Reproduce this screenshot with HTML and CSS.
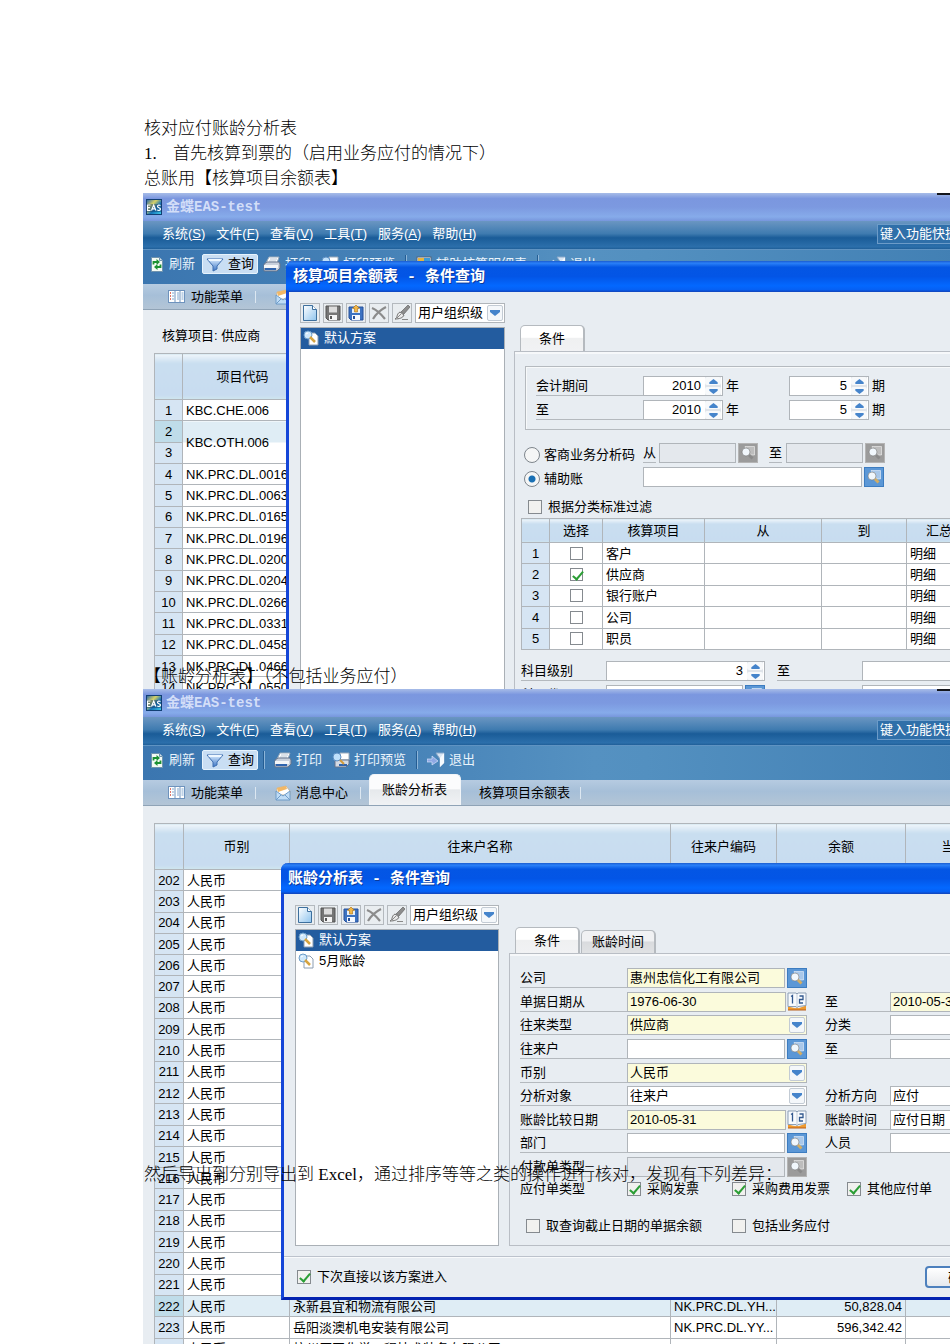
FILE: index.html
```html
<!DOCTYPE html>
<html lang="zh-CN">
<head>
<meta charset="utf-8">
<title>核对应付账龄分析表</title>
<link rel="stylesheet" href="styles.css">
</head>
<body>
<svg class="defs" aria-hidden="true">
  <defs>
    <linearGradient id="g-blue" x1="0" y1="0" x2="1" y2="1"><stop offset="0" stop-color="#fff"/><stop offset="1" stop-color="#8fc4ee"/></linearGradient>
    <linearGradient id="g-eas" x1="0" y1="0" x2="1" y2="1"><stop offset="0" stop-color="#1c5fae"/><stop offset=".35" stop-color="#d8d264"/><stop offset=".6" stop-color="#1673b8"/><stop offset="1" stop-color="#3fd0ea"/></linearGradient>
    <linearGradient id="g-funnel" x1="0" y1="0" x2="0" y2="1"><stop offset="0" stop-color="#d9ecff"/><stop offset="1" stop-color="#3a74c4"/></linearGradient>
    <symbol id="eas" viewBox="0 0 16 16"><rect x=".5" y=".5" width="15" height="15" fill="url(#g-eas)" stroke="#123f74"/><rect y="5" width="16" height="8" fill="#123a6a" opacity=".45"/><path d="M4.500 6H1.500v5.500h3M1.500 8.700h2.500M5.500 11.500L7.700 6l2.200 5.500M6.300 9.800h2.800M14.500 6.500c-1-.8-3-.6-3 .9 0 1.600 3 1 3 2.700 0 1.500-2.200 1.800-3.300.8" fill="none" stroke="#fff" stroke-width="1.200"/></symbol>
    <symbol id="refresh" viewBox="0 0 16 16"><path d="M2.500 1.500h8l3 3v11h-11z" fill="#f4faf4" stroke="#6f93ae"/><path d="M10.500 1.500v3h3" fill="#cfe0ea" stroke="#6f93ae"/><path d="M4.500 8.500V6H8M11.500 8.500V11H8" fill="none" stroke="#1c9133" stroke-width="1.800"/><path d="M7.500 3l3.500 3-3.500 3zM8.500 8L5 11l3.500 3z" fill="#1c9133"/></symbol>
    <symbol id="funnel" viewBox="0 0 18 16"><path d="M1 3h16l-6 7v3l-4 2v-5z" fill="url(#g-funnel)" stroke="#3f6fb0"/><path d="M2 3h14l-1 2H3z" fill="#eef7ff"/></symbol>
    <symbol id="printer" viewBox="0 0 18 16"><path d="M6 1h10l-2 6H3z" fill="#fff" stroke="#9ab"/><path d="M7 3h7M6 5h7" stroke="#b6c4d4"/><path d="M1 8l3-2h12l1 2v4l-3 3H1z" fill="#c8d0dc" stroke="#66758c"/><path d="M1 9h14v3H1z" fill="#f4f6f8"/><path d="M2 13h11" stroke="#2f64ae" stroke-width="2"/></symbol>
    <symbol id="preview" viewBox="0 0 18 16"><path d="M8 1h9v7H8z" fill="#fff" stroke="#9ab"/><path d="M3 8h14v4l-3 3H3z" fill="#d5dbe4" stroke="#66758c"/><path d="M7 13h8" stroke="#2f64ae" stroke-width="2"/><circle cx="5" cy="5" r="4" fill="#bfe0fb" stroke="#5d8fc4"/><path d="M8 8l4 4" stroke="#d29a3a" stroke-width="2"/></symbol>
    <symbol id="exit" viewBox="0 0 18 16"><path d="M9 1h8v10l-4 4V7z" fill="#d8e6f4" stroke="#8aa8c8"/><path d="M17 1l-4 5v9l4-4z" fill="#f6fbff"/><path d="M0 7h5V4l6 5-6 4v-3H0z" fill="#8fa9e4" stroke="#e4eeff" stroke-width=".6"/></symbol>
    <symbol id="detail" viewBox="0 0 16 16"><rect x="1" y="1" width="14" height="13" fill="#eef" stroke="#567"/><rect x="2" y="2" width="6" height="4" fill="#e8b53c"/><rect x="8" y="2" width="6" height="4" fill="#3a9ad8"/></symbol>
    <symbol id="menu-list" viewBox="0 0 18 16"><rect x=".5" y="1.500" width="16" height="12" fill="#fff" stroke="#6e93bd"/><path d="M7 2v12M12 2v12" stroke="#6e93bd"/><path d="M9 4h2M9 6h2M9 8h2M9 10h2M13.500 4h2M13.500 6h2M13.500 8h2M13.500 10h2M4 4h2M4 7h2M4 10h2" stroke="#7fa6cf"/><path d="M2 4h1M2 7h1M2 10h1" stroke="#d04a3a" stroke-width="1.500"/></symbol>
    <symbol id="mail" viewBox="0 0 16 16"><path d="M2 3l9-2 4 5v4H1z" fill="#fff" stroke="#c9b79a"/><path d="M2 3l9-2 1 3-9 3z" fill="#f2b765"/><path d="M1 6l7 5 7-5v9H1z" fill="#bfdcf6" stroke="#6f9cc8"/><path d="M1 15l5-5M15 15l-5-5" stroke="#6f9cc8"/></symbol>
    <symbol id="new" viewBox="0 0 16 16"><path d="M1.500.500h9l4 4v11h-13z" fill="url(#g-blue)" stroke="#3d6f9d"/><path d="M10.500.500v4h4" fill="#fff" stroke="#3d6f9d"/></symbol>
    <symbol id="save" viewBox="0 0 16 16"><path d="M1 1h14v14H3l-2-2z" fill="#757575" stroke="#555"/><rect x="4" y="1.500" width="8" height="6" fill="#dcdcdc"/><rect x="4" y="10" width="8" height="5" fill="#f4f4f4"/><rect x="5" y="11" width="2" height="3" fill="#555"/></symbol>
    <symbol id="saveas" viewBox="0 0 16 16"><path d="M1 2h14v13H3l-2-2z" fill="#3c72c2" stroke="#27509a"/><rect x="4" y="3" width="8" height="5" fill="#e6effa"/><rect x="4" y="10" width="8" height="5" fill="#f4f8ff"/><rect x="5" y="11" width="2" height="3" fill="#27509a"/><path d="M8 0l3.500 3.500h-2V7h-3V3.500h-2z" fill="#f3b746" stroke="#a86f12" stroke-width=".6"/></symbol>
    <symbol id="delete" viewBox="0 0 16 16"><path d="M1 3c5 2 9 6 13 11M15 2C9 5 5 9 2 14" stroke="#8c8c8c" stroke-width="2.200" fill="none"/></symbol>
    <symbol id="brush" viewBox="0 0 16 16"><path d="M14 0l2 2-6 7-3-2z" fill="#8d8d8d" stroke="#666" stroke-width=".7"/><path d="M6 7l4 3c-1 3-5 4-9 4 3-1 1-5 5-7z" fill="#e9e9e9" stroke="#707070"/><path d="M3 13l4-4M8 14.500h6" stroke="#888"/></symbol>
    <symbol id="plan" viewBox="0 0 16 16"><path d="M6 3h6l3 3v9H6z" fill="#fff" stroke="#8b9db2"/><circle cx="5" cy="5" r="4" fill="#cfe8fb" stroke="#6a9cc9"/><path d="M7 7l5 5" stroke="#d5a441" stroke-width="2.500"/><path d="M3 4l2-1" stroke="#fff"/></symbol>
    <symbol id="lookup" viewBox="0 0 16 16"><path d="M5 1.500h9.500V10H8z" fill="currentColor" stroke="#fff" stroke-opacity=".5"/><path d="M8 9l4.500 4.500" stroke="var(--handle)" stroke-width="2.800"/><circle cx="6" cy="7" r="4" fill="#f1f7fc" stroke="#777" stroke-width=".6"/></symbol>
    <symbol id="calendar" viewBox="0 0 20 18"><path d="M1 16h18v2H1z" fill="#b95f1c"/><path d="M1 14l8 2 1-1 1 1 8-3v4H1z" fill="#ef9a2e"/><path d="M1 .5h8l1 1 1-1h8V13l-8 1-1 1-1-1H1z" fill="#f7fafd" stroke="#8d9fb5"/><path d="M10 2v13" stroke="#8d9fb5" stroke-dasharray="1 1"/><path d="M4 4l1.500-1v8M12.500 3.500H16V7h-3.500v3.500H16" fill="none" stroke="#32588e" stroke-width="1.300"/></symbol>
    <symbol id="down" viewBox="0 0 10 6"><path d="M0 0h10v2L5 6 0 2z" fill="#4584cb"/></symbol>
    <symbol id="up" viewBox="0 0 10 6"><path d="M5 0l5 4v2H0V4z" fill="#4584cb"/></symbol>
  </defs>
</svg>

<main class="page">
  <p class="line">核对应付账龄分析表</p>
  <p class="line"><span class="line-no">1.</span>首先核算到票的（启用业务应付的情况下）</p>
  <p class="line">总账用【核算项目余额表】</p>

  <figure class="shot shot-first">
    <div class="screen">
      <header class="titlebar"><svg class="ic16"><use href="#eas"/></svg>金蝶EAS-test<i class="edge"></i></header>
      <nav class="menubar">
        <a href="#">系统(<u>S</u>)</a><a href="#">文件(<u>F</u>)</a><a href="#">查看(<u>V</u>)</a><a href="#">工具(<u>T</u>)</a><a href="#">服务(<u>A</u>)</a><a href="#">帮助(<u>H</u>)</a>
        <input class="quick" aria-label="功能快捷码" value="键入功能快捷码">
      </nav>
      <div class="toolbar">
        <button class="tool"><svg class="ic16"><use href="#refresh"/></svg>刷新</button>
        <button class="tool tool-on"><svg class="ic18"><use href="#funnel"/></svg>查询</button>
        <button class="tool"><svg class="ic18"><use href="#printer"/></svg>打印</button>
        <button class="tool"><svg class="ic18"><use href="#preview"/></svg>打印预览</button>
        <i class="sep"></i>
        <button class="tool"><svg class="ic16"><use href="#detail"/></svg>辅助核算明细表</button>
        <i class="sep"></i>
        <button class="tool"><svg class="ic18"><use href="#exit"/></svg>退出</button>
      </div>
      <div class="tabbar">
        <button class="tab"><svg class="ic18"><use href="#menu-list"/></svg>功能菜单</button>
        <button class="tab"><svg class="ic16"><use href="#mail"/></svg>消息中心</button>
      </div>
      <section class="content content-first">
        <p class="subject">核算项目: 供应商</p>
        <table class="grid items">
          <colgroup><col class="w28"><col class="w120"></colgroup>
          <thead><tr class="head-tall"><th></th><th>项目代码</th></tr></thead>
          <tbody>
            <tr><th>1</th><td>KBC.CHE.006</td></tr>
            <tr><th class="hit">2</th><td class="merged" rowspan="2">KBC.OTH.006</td></tr>
            <tr><th>3</th></tr>
            <tr><th>4</th><td>NK.PRC.DL.0016</td></tr>
            <tr><th>5</th><td>NK.PRC.DL.0063</td></tr>
            <tr><th>6</th><td>NK.PRC.DL.0165</td></tr>
            <tr><th>7</th><td>NK.PRC.DL.0196</td></tr>
            <tr><th>8</th><td>NK.PRC.DL.0200</td></tr>
            <tr><th>9</th><td>NK.PRC.DL.0204</td></tr>
            <tr><th>10</th><td>NK.PRC.DL.0266</td></tr>
            <tr><th>11</th><td>NK.PRC.DL.0331</td></tr>
            <tr><th>12</th><td>NK.PRC.DL.0458</td></tr>
            <tr><th>13</th><td>NK.PRC.DL.0466</td></tr>
            <tr><th>14</th><td>NK.PRC.DL.0550</td></tr>
          </tbody>
        </table>
      </section>

      <section class="dialog dialog-first">
        <h2 class="dialog-title">核算项目余额表 - 条件查询</h2>
        <div class="dialog-body">
          <div class="side">
            <div class="plan-tools">
              <button class="sq" aria-label="新建"><svg class="ic16"><use href="#new"/></svg></button>
              <button class="sq" aria-label="保存"><svg class="ic16"><use href="#save"/></svg></button>
              <button class="sq" aria-label="另存"><svg class="ic16"><use href="#saveas"/></svg></button>
              <button class="sq" aria-label="删除"><svg class="ic16"><use href="#delete"/></svg></button>
              <button class="sq" aria-label="清空"><svg class="ic16"><use href="#brush"/></svg></button>
              <span class="pick"><select aria-label="级别"><option>用户组织级</option></select><span class="arrow"><svg><use href="#down"/></svg></span></span>
            </div>
            <ul class="plans"><li class="on"><svg class="ic16"><use href="#plan"/></svg>默认方案</li></ul>
          </div>
          <div class="main">
            <div class="ptabs"><button class="ptab on">条件</button></div>
            <div class="panel panel-first">
              <div class="group">
                <div class="row"><label class="lab w107" for="y1">会计期间</label><span class="spin w80"><input id="y1" value="2010"><span class="ud"><button aria-label="增"><svg><use href="#up"/></svg></button><button aria-label="减"><svg><use href="#down"/></svg></button></span></span><span class="unit">年</span><span class="spin w80"><input aria-label="期" value="5"><span class="ud"><button aria-label="增"><svg><use href="#up"/></svg></button><button aria-label="减"><svg><use href="#down"/></svg></button></span></span><span class="unit">期</span></div>
                <div class="row"><label class="lab w107" for="y2">至</label><span class="spin w80"><input id="y2" value="2010"><span class="ud"><button aria-label="增"><svg><use href="#up"/></svg></button><button aria-label="减"><svg><use href="#down"/></svg></button></span></span><span class="unit">年</span><span class="spin w80"><input aria-label="期" value="5"><span class="ud"><button aria-label="增"><svg><use href="#up"/></svg></button><button aria-label="减"><svg><use href="#down"/></svg></button></span></span><span class="unit">期</span></div>
              </div>
              <div class="row modes">
                <label class="opt w122"><input type="radio" name="mode">客商业务分析码</label>
                <label class="lab" for="from">从</label><input class="box w77" id="from" disabled><button class="find off" aria-label="查找" disabled><svg class="ic18"><use href="#lookup"/></svg></button>
                <label class="lab to" for="to">至</label><input class="box w77" id="to" disabled><button class="find off" aria-label="查找" disabled><svg class="ic18"><use href="#lookup"/></svg></button>
              </div>
              <div class="row ledger">
                <label class="opt w122"><input type="radio" name="mode" checked>辅助账</label>
                <input class="box w219" aria-label="辅助账"><button class="find" aria-label="查找"><svg class="ic18"><use href="#lookup"/></svg></button>
              </div>
              <div class="row standard"><label class="opt"><input type="checkbox">根据分类标准过滤</label></div>
              <table class="grid aux">
                <colgroup><col class="w28"><col class="w53"><col class="w102"><col class="w117"><col class="w85"><col class="w85"></colgroup>
                <thead><tr class="head"><th></th><th>选择</th><th>核算项目</th><th>从</th><th>到</th><th class="sum">汇总级次</th></tr></thead>
                <tbody>
                  <tr><th>1</th><td><input type="checkbox" aria-label="客户"></td><td>客户</td><td></td><td></td><td>明细</td></tr>
                  <tr><th>2</th><td><input type="checkbox" aria-label="供应商" checked></td><td>供应商</td><td></td><td></td><td>明细</td></tr>
                  <tr><th>3</th><td><input type="checkbox" aria-label="银行账户"></td><td>银行账户</td><td></td><td></td><td>明细</td></tr>
                  <tr><th>4</th><td><input type="checkbox" aria-label="公司"></td><td>公司</td><td></td><td></td><td>明细</td></tr>
                  <tr><th>5</th><td><input type="checkbox" aria-label="职员"></td><td>职员</td><td></td><td></td><td>明细</td></tr>
                </tbody>
              </table>
              <div class="row levels"><label class="lab w85" for="lv">科目级别</label><span class="spin w159"><input id="lv" value="3"><span class="ud"><button aria-label="增"><svg><use href="#up"/></svg></button><button aria-label="减"><svg><use href="#down"/></svg></button></span></span><label class="lab w85 next" for="lv2">至</label><input class="box w122" id="lv2"></div>
              <div class="row"><label class="lab w85" for="cd">科目代码</label><input class="box w137" id="cd"><button class="find" aria-label="查找"><svg class="ic18"><use href="#lookup"/></svg></button><label class="lab w85 next" for="cd2">至</label><input class="box w122" id="cd2"></div>
            </div>
          </div>
        </div>
      </section>
    </div>
    <figcaption class="over">【账龄分析表】（不包括业务应付）</figcaption>
  </figure>

  <figure class="shot shot-second">
    <div class="screen">
      <header class="titlebar"><svg class="ic16"><use href="#eas"/></svg>金蝶EAS-test<i class="edge"></i></header>
      <nav class="menubar">
        <a href="#">系统(<u>S</u>)</a><a href="#">文件(<u>F</u>)</a><a href="#">查看(<u>V</u>)</a><a href="#">工具(<u>T</u>)</a><a href="#">服务(<u>A</u>)</a><a href="#">帮助(<u>H</u>)</a>
        <input class="quick" aria-label="功能快捷码" value="键入功能快捷码">
      </nav>
      <div class="toolbar">
        <button class="tool"><svg class="ic16"><use href="#refresh"/></svg>刷新</button>
        <button class="tool tool-on"><svg class="ic18"><use href="#funnel"/></svg>查询</button>
        <i class="sep"></i>
        <button class="tool"><svg class="ic18"><use href="#printer"/></svg>打印</button>
        <button class="tool"><svg class="ic18"><use href="#preview"/></svg>打印预览</button>
        <i class="sep"></i>
        <button class="tool"><svg class="ic18"><use href="#exit"/></svg>退出</button>
      </div>
      <div class="tabbar">
        <button class="tab"><svg class="ic18"><use href="#menu-list"/></svg>功能菜单</button>
        <button class="tab"><svg class="ic16"><use href="#mail"/></svg>消息中心</button>
        <button class="tab tab-on">账龄分析表</button>
        <button class="tab">核算项目余额表</button>
      </div>
      <section class="content content-second">
        <table class="grid aging">
          <colgroup><col class="w29"><col class="w106"><col class="w381"><col class="w106"><col class="w129"><col class="w85"></colgroup>
          <thead><tr class="head-tall"><th></th><th>币别</th><th>往来户名称</th><th>往来户编码</th><th>余额</th><th>当</th></tr></thead>
          <tbody>
            <tr><th>202</th><td>人民币</td><td></td><td></td><td></td><td></td></tr>
            <tr><th>203</th><td>人民币</td><td></td><td></td><td></td><td></td></tr>
            <tr><th>204</th><td>人民币</td><td></td><td></td><td></td><td></td></tr>
            <tr><th>205</th><td>人民币</td><td></td><td></td><td></td><td></td></tr>
            <tr><th>206</th><td>人民币</td><td></td><td></td><td></td><td></td></tr>
            <tr><th>207</th><td>人民币</td><td></td><td></td><td></td><td></td></tr>
            <tr><th>208</th><td>人民币</td><td></td><td></td><td></td><td></td></tr>
            <tr><th>209</th><td>人民币</td><td></td><td></td><td></td><td></td></tr>
            <tr><th>210</th><td>人民币</td><td></td><td></td><td></td><td></td></tr>
            <tr><th>211</th><td>人民币</td><td></td><td></td><td></td><td></td></tr>
            <tr><th>212</th><td>人民币</td><td></td><td></td><td></td><td></td></tr>
            <tr><th>213</th><td>人民币</td><td></td><td></td><td></td><td></td></tr>
            <tr><th>214</th><td>人民币</td><td></td><td></td><td></td><td></td></tr>
            <tr><th>215</th><td>人民币</td><td></td><td></td><td></td><td></td></tr>
            <tr><th>216</th><td>人民币</td><td></td><td></td><td></td><td></td></tr>
            <tr><th>217</th><td>人民币</td><td></td><td></td><td></td><td></td></tr>
            <tr><th>218</th><td>人民币</td><td></td><td></td><td></td><td></td></tr>
            <tr><th>219</th><td>人民币</td><td></td><td></td><td></td><td></td></tr>
            <tr><th>220</th><td>人民币</td><td></td><td></td><td></td><td></td></tr>
            <tr><th>221</th><td>人民币</td><td></td><td></td><td></td><td></td></tr>
            <tr class="hit-row"><th class="hit">222</th><td>人民币</td><td>永新县宜和物流有限公司</td><td>NK.PRC.DL.YH...</td><td class="num">50,828.04</td><td></td></tr>
            <tr><th>223</th><td>人民币</td><td>岳阳淡澳机电安装有限公司</td><td>NK.PRC.DL.YY...</td><td class="num">596,342.42</td><td></td></tr>
            <tr><th>224</th><td>人民币</td><td>杭州原正化学工程技术装备有限公司</td><td>NK.PRC.DL.YZ...</td><td class="num">10,200.00</td><td></td></tr>
          </tbody>
        </table>
      </section>

      <section class="dialog dialog-second">
        <h2 class="dialog-title">账龄分析表 - 条件查询</h2>
        <div class="dialog-body">
          <div class="side">
            <div class="plan-tools">
              <button class="sq" aria-label="新建"><svg class="ic16"><use href="#new"/></svg></button>
              <button class="sq" aria-label="保存"><svg class="ic16"><use href="#save"/></svg></button>
              <button class="sq" aria-label="另存"><svg class="ic16"><use href="#saveas"/></svg></button>
              <button class="sq" aria-label="删除"><svg class="ic16"><use href="#delete"/></svg></button>
              <button class="sq" aria-label="清空"><svg class="ic16"><use href="#brush"/></svg></button>
              <span class="pick"><select aria-label="级别"><option>用户组织级</option></select><span class="arrow"><svg><use href="#down"/></svg></span></span>
            </div>
            <ul class="plans"><li class="on"><svg class="ic16"><use href="#plan"/></svg>默认方案</li><li><svg class="ic16"><use href="#plan"/></svg>5月账龄</li></ul>
          </div>
          <div class="main">
            <div class="ptabs"><button class="ptab on">条件</button><button class="ptab">账龄时间</button></div>
            <div class="panel panel-second">
              <div class="fields">
                <div class="field"><label class="lab w107" for="co">公司</label><input class="box must" id="co" value="惠州忠信化工有限公司"><button class="find" aria-label="查找"><svg class="ic18"><use href="#lookup"/></svg></button></div>
                <div class="field right"></div>
                <div class="field"><label class="lab w107" for="d1">单据日期从</label><input class="box must" id="d1" value="1976-06-30"><button class="date" aria-label="日历"><svg><use href="#calendar"/></svg></button></div>
                <div class="field right"><label class="lab w65" for="d2">至</label><input class="box must" id="d2" value="2010-05-31"></div>
                <div class="field"><label class="lab w107" for="ty">往来类型</label><span class="pick must"><select id="ty"><option>供应商</option></select><span class="arrow"><svg><use href="#down"/></svg></span></span></div>
                <div class="field right"><label class="lab w65" for="cl">分类</label><input class="box" id="cl"></div>
                <div class="field"><label class="lab w107" for="pt">往来户</label><input class="box" id="pt"><button class="find" aria-label="查找"><svg class="ic18"><use href="#lookup"/></svg></button></div>
                <div class="field right"><label class="lab w65" for="pt2">至</label><input class="box" id="pt2"></div>
                <div class="field"><label class="lab w107" for="cu">币别</label><span class="pick must"><select id="cu"><option>人民币</option></select><span class="arrow"><svg><use href="#down"/></svg></span></span></div>
                <div class="field right"></div>
                <div class="field"><label class="lab w107" for="ob">分析对象</label><span class="pick"><select id="ob"><option>往来户</option></select><span class="arrow"><svg><use href="#down"/></svg></span></span></div>
                <div class="field right"><label class="lab w65" for="di">分析方向</label><span class="pick"><select id="di"><option>应付</option></select><span class="arrow"><svg><use href="#down"/></svg></span></span></div>
                <div class="field"><label class="lab w107" for="cp">账龄比较日期</label><input class="box must" id="cp" value="2010-05-31"><button class="date" aria-label="日历"><svg><use href="#calendar"/></svg></button></div>
                <div class="field right"><label class="lab w65" for="ti">账龄时间</label><span class="pick"><select id="ti"><option>应付日期</option></select><span class="arrow"><svg><use href="#down"/></svg></span></span></div>
                <div class="field"><label class="lab w107" for="de">部门</label><input class="box" id="de"><button class="find" aria-label="查找"><svg class="ic18"><use href="#lookup"/></svg></button></div>
                <div class="field right"><label class="lab w65" for="pe">人员</label><input class="box" id="pe"></div>
                <div class="field"><label class="lab w107" for="pay">付款单类型</label><input class="box" id="pay" disabled><button class="find off" aria-label="查找" disabled><svg class="ic18"><use href="#lookup"/></svg></button></div>
              </div>
              <div class="row kinds"><span class="w107">应付单类型</span><label class="opt w105"><input type="checkbox" checked>采购发票</label><label class="opt w115"><input type="checkbox" checked>采购费用发票</label><label class="opt"><input type="checkbox" checked>其他应付单</label></div>
              <div class="row extras"><label class="opt w206"><input type="checkbox">取查询截止日期的单据余额</label><label class="opt"><input type="checkbox">包括业务应付</label></div>
            </div>
          </div>
        </div>
        <footer class="dialog-foot"><label class="opt"><input type="checkbox" checked>下次直接以该方案进入</label><button class="ok">确定</button></footer>
      </section>
    </div>
    <figcaption class="over over-mid">然后导出到分别导出到 Excel，通过排序等等之类的操作进行核对，发现有下列差异：</figcaption>
  </figure>
</main>
</body>
</html>
```
FILE: styles.css
```css
* { box-sizing: border-box; }
body { margin: 0; background: #fff; color: #000; }
.defs { position: absolute; width: 0; height: 0; }
button, input, select { font: inherit; color: inherit; margin: 0; padding: 0; border: 0; border-radius: 0; background: none; }
a { color: inherit; text-decoration: none; }
p, figure, h2, ul { margin: 0; padding: 0; }

/* document */
.page { height: 100vh; min-height: 1344px; padding: 116px 0 0 143px; overflow: hidden; display: flex; flex-direction: column; }
.line, .over { font: 300 17px/25px "Liberation Serif", "Noto Sans CJK SC", serif; color: #000; padding-left: 1px; white-space: nowrap; }
.line-no { display: inline-block; width: 29px; }
.shot { position: relative; overflow: hidden; }
.shot-first { margin-top: 2px; height: 496px; flex: none; }
.shot-second { flex: 1; }
.over { position: absolute; left: 0; bottom: 0; }
.over-mid { top: 473px; bottom: auto; }

/* application window */
.screen { position: relative; width: calc(100% + 60px); height: 100%; font: 13px/20px "Liberation Sans", "Noto Sans CJK SC", sans-serif; background: #e8edf2; overflow: hidden; }
.ic16 { width: 16px; height: 16px; flex: none; }
.ic18 { width: 18px; height: 16px; flex: none; }
.titlebar { position: relative; display: flex; align-items: center; gap: 4px; height: 28px; padding-left: 3px; font: bold 14px/20px "Liberation Mono", "Noto Sans CJK SC", monospace; color: #d3def8; background: linear-gradient(#a7bce8, #7b97df 20%, #7c99e0 50%, #86abea 85%, #7796dc); }
.edge { position: absolute; top: 0; right: 40px; width: 33px; height: 2px; background: #14161c; }
.menubar { display: flex; align-items: center; gap: 11px; height: 28px; padding: 0 0 2px 19px; color: #fff; background: linear-gradient(#6b96c2, #3f7bb0 45%, #1a5c98 60%, #2c6fab 92%, #205f98); }
.quick { width: 133px; height: 20px; margin-left: auto; padding-left: 2px; border: 1px solid #6c9bc8; background: #2f6fa9; }
.toolbar { display: flex; align-items: flex-start; height: 35px; padding: 4px 0 0 1px; color: #e9f3fb; background: linear-gradient(90deg, #3b76b0, #4480b6 25%, #5591c1 52%, #5390c0 58%, #3f7db2); border-top: 1px solid #5f93c2; }
.tool { display: flex; align-items: center; gap: 4px; height: 20px; padding: 0 5px; }
.tool-on { margin: 0 0 0 2px; border: 1px solid #e6f3fd; border-radius: 2px; color: #000; background: #c9def3; padding: 0 3px; }
.sep { width: 2px; height: 18px; margin: 1px 4px 0 5px; border-left: 1px solid #245d93; border-right: 1px solid #8db5d8; }
.tabbar { display: flex; align-items: flex-end; height: 26px; padding-left: 13px; background: linear-gradient(#b6cbe1, #a6bfd8 45%, #b3c5d6); border-bottom: 1px solid #8fa3b6; }
.tab { display: flex; align-items: center; gap: 5px; height: 25px; padding: 0 12px; border-right: 1px solid transparent; border-image: linear-gradient(transparent 30%, #dce7f1 30%, #dce7f1 75%, transparent 75%) 1; }
.tab + .tab { margin-left: 7px; }
.tab.tab-on { height: 31px; margin: 0 0 0 8px; padding: 0 13px 0 12px; border: 1px solid #f2f5f8; border-bottom: 0; border-image: none; border-radius: 5px 5px 0 0; background: linear-gradient(#fbfcfd 45%, #e6e9ec 50%, #f0f2f4); }
.tab-on + .tab.tab { margin-left: 6px; padding-right: 10px; }

/* data grids */
.grid { border-collapse: collapse; table-layout: fixed; background: #fff; border: 1px solid #a9afb5; }
.grid th, .grid td { padding: 0 3px; border: 1px solid #b0b5ba; line-height: 19px; font-weight: normal; text-align: left; white-space: nowrap; overflow: hidden; }
.grid tbody th { padding: 0; text-align: center; background: #d6e5f3; }
.grid thead th { text-align: center; background: linear-gradient(#eef5fa, #c9def0 20%, #c8dcf0 90%, #cfe6ee); }
.grid .head-tall { height: 46px; }
.grid .head { height: 24px; }
.grid tbody .hit { background: #bfdce9; }
.grid .hit-row td { background: #dfedf5; }
.grid .merged { background: linear-gradient(#dfedf5 50%, #fff 50%); }
.grid .num { text-align: right; }
.grid th.sum { text-align: left; padding-left: 19px; }
.content { padding-left: 11px; }
.content-first { padding-top: 16px; }
.subject { padding-left: 8px; margin-bottom: 7px; }
.items { width: 148px; height: 346px; }
.content-second { padding-top: 17px; }
.aging { width: 836px; height: 537px; }
.aux { width: 470px; height: 132px; }

/* dialogs */
.dialog { position: absolute; right: -10px; display: flex; flex-direction: column; background: #e8edf2; border: solid #1446d8; border-width: 0 0 3px 3px; border-radius: 7px 0 0 0; }
.dialog-first { left: 143px; top: 68px; height: 500px; }
.dialog-second { left: 138px; top: 174px; height: 437px; border-bottom-color: #0322b0; }
.dialog-title { height: 31px; flex: none; margin-left: -3px; padding: 7px 0 0 7px; border-radius: 7px 0 0 0; font: bold 15px/20px "Liberation Mono", "Noto Sans CJK SC", monospace; color: #fff; text-shadow: 1px 1px #0a3a9c; background: linear-gradient(#1a5cd0, #2a80f8 7%, #0456e4 20%, #0355e6 50%, #0368ff 80%, #0560f4 92%, #1243b8); }
.dialog-body { display: flex; flex: 1; gap: 9px; padding: 11px 0 0 11px; }
.side { width: 205px; display: flex; flex-direction: column; gap: 3px; flex: none; }
.plan-tools { display: flex; gap: 3px; height: 21px; }
.sq { width: 20px; height: 20px; padding: 1px; flex: none; border: 1px solid #b4b9be; background: #e9edf0; display: flex; }
.plans { flex: 1; list-style: none; background: #fff; border: 1px solid #aab0b6; }
.plans li { display: flex; align-items: center; gap: 5px; height: 21px; padding: 0 0 1px 2px; }
.plans .on { color: #fff; background: #235c9f; }
.main { flex: 1; display: flex; flex-direction: column; padding-top: 22px; }
.ptabs { display: flex; align-items: flex-end; gap: 1px; height: 26px; padding-left: 6px; }
.ptab { height: 23px; padding: 0 10px; border: 1px solid #b5babf; border-width: 1px 2px 0 1px; border-radius: 5px 5px 0 0; background: linear-gradient(#f0f1f3 45%, #d9dbde 50%, #e0e2e4); }
.ptab.on { height: 26px; padding: 0 18px; background: linear-gradient(#fff 45%, #eff0f1 50%, #f1f2f4); }
.panel { flex: 1; border: 1px solid #b9bec5; border-right: 0; box-shadow: inset 0 2px #f6f8fa; }
.row, .field { display: flex; height: 20px; }
.lab { border-bottom: 1px solid #b4b9be; height: 20px; flex: none; white-space: nowrap; }
.box, .pick, .spin { position: relative; height: 20px; border: 1px solid #b0b5ba; background: #fff; }
.box { padding-left: 2px; min-width: 0; }
.box:disabled { background: #e4e8ed; }
.pick { display: flex; flex: 1; padding-right: 1px; align-items: center; }
.pick select { appearance: none; flex: 1; width: 100%; height: 18px; padding-left: 2px; line-height: 18px; }
.arrow { flex: none; width: 16px; height: 16px; display: flex; align-items: center; justify-content: center; border: 1px solid #c3cbd4; border-radius: 2px; background: #f4f7fa; pointer-events: none; }
.arrow svg { width: 10px; height: 6px; }
.must, .pick.must { background: #fbfbdc; }
.spin { display: flex; padding: 0 1px 0 0; }
.spin input { flex: 1; min-width: 0; width: 20px; text-align: right; padding-right: 4px; }
.ud { width: 16px; display: flex; flex-direction: column; justify-content: space-between; background: #dfe4ea; }
.ud button { display: flex; align-items: center; justify-content: center; height: 8px; background: #f7f9fb; border-radius: 2px; }
.ud svg { width: 9px; height: 5px; }
.unit { width: 66px; padding-left: 3px; }
.find { --handle: #d3ad63; width: 20px; height: 20px; margin-left: 2px; flex: none; display: flex; align-items: center; color: #a9c8ea; background: #5b97d6; border: 1px solid #3c7cc0; }
.find.off { --handle: #8a8a8a; color: #bdbdbd; background: #9b9b9b; border-color: #b4b4b4; }
.date { width: 20px; height: 20px; margin-left: 1px; flex: none; }
.date svg { display: block; width: 20px; height: 19px; }

/* tick boxes and radios */
.opt { display: flex; align-items: center; gap: 6px; flex: none; }
input[type="checkbox"] { appearance: none; display: block; width: 14px; height: 14px; flex: none; border: 1px solid #858a8f; background: #f1f1ef; position: relative; }
input[type="checkbox"]:checked::after { content: ""; position: absolute; left: 4px; top: 0; width: 4px; height: 9px; border: solid #2b9e35; border-width: 0 2px 2px 0; transform: rotate(40deg); }
.grid input[type="checkbox"] { width: 13px; height: 13px; margin: 0 auto; background: #fff; }
input[type="radio"] { appearance: none; width: 16px; height: 16px; border: 1px solid #7e858c; border-radius: 50%; background: #f5f6f6; }
input[type="radio"]:checked { background: radial-gradient(circle, #1a70b4 0 3px, #f5f6f6 4px); }

/* first dialog form */
.panel-first { padding: 14px 0 0 6px; }
.group { margin: 0 0 13px 4px; padding: 9px 10px; border: 1px solid #b5babf; border-right: 0; box-shadow: inset 1px 1px #f7f9fa; display: flex; flex-direction: column; gap: 4px; }
.panel-first .opt { padding-left: 3px; gap: 4px; }
.modes { margin-bottom: 4px; }
.modes .lab { margin-right: 3px; }
.modes .lab.to { margin-left: 11px; margin-right: 4px; }
.modes .opt, .ledger .opt { padding-top: 3px; }
.panel-first .standard { margin: 10px 0 1px 4px; }
.standard .opt { gap: 6px; }
.levels { margin: 11px 0 4px; }
.next { margin-left: 12px; }

/* second dialog form */
.panel-second { padding: 14px 0 0 10px; }
.dialog-second .dialog-body { gap: 10px; }
.dialog-second .side { width: 204px; }
.fields { display: grid; grid-template-columns: 287px 190px; column-gap: 18px; height: 209px; align-content: space-between; }
.field .box { flex: 1; }
.kinds { margin-top: 2px; }
.extras { margin-top: 17px; padding-left: 6px; }
.dialog-foot { display: flex; align-items: center; height: 41px; margin-top: 10px; padding: 0 23px 0 13px; border-top: 1px solid #bcc2cc; box-shadow: inset 0 1px #f8fafc; }
.ok { margin-left: auto; width: 72px; height: 22px; border: 2px solid #4d80bd; border-radius: 4px; background: linear-gradient(#fff, #e6e9ed); }

/* shared widths */
.w28 { width: 28px; }
.w29 { width: 29px; }
.w53 { width: 53px; }
.w65 { width: 65px; }
.w77 { width: 77px; }
.w80 { width: 80px; }
.w85 { width: 85px; }
.w102 { width: 102px; }
.w105 { width: 105px; }
.w106 { width: 106px; }
.w107 { width: 107px; }
.w115 { width: 115px; }
.w117 { width: 117px; }
.w120 { width: 120px; }
.w122 { width: 122px; }
.w129 { width: 129px; }
.w137 { width: 137px; }
.w159 { width: 159px; }
.w206 { width: 206px; }
.w219 { width: 219px; }
.w381 { width: 381px; }
```
